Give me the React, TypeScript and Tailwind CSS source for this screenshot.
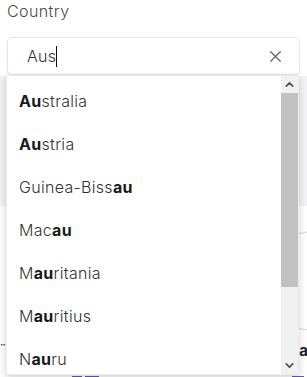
import { X, ChevronUp, ChevronDown } from "lucide-react";

const options: [string, string, string][] = [
  ["", "Au", "stralia"],
  ["", "Au", "stria"],
  ["Guinea-Biss", "au", ""],
  ["Mac", "au", ""],
  ["M", "au", "ritania"],
  ["M", "au", "ritius"],
  ["N", "au", "ru"],
];

export default function App() {
  return (
    <div className="relative w-[307px] h-[377px] overflow-hidden bg-white font-['Inter',sans-serif]">
      <div className="px-[7px]">
        <label className="block text-[16px] leading-[22px] tracking-[0.4px] font-light text-[#4a4a4a]">Country</label>
        <div className="mt-[15px] h-[38px] flex items-center rounded-[5px] border border-[#e6e6e6] bg-white pl-[19px] pr-[14px] shadow-[0_1px_2px_rgba(0,0,0,0.05)]">
          <span className="text-[16px] tracking-[0.3px] font-light text-[#333]">Aus</span>
          <span className="w-px h-[21px] bg-[#111]" />
          <X className="ml-auto w-[19px] h-[19px] text-[#666]" strokeWidth={1.6} />
        </div>
      </div>

      {/* page content behind the open list */}
      <div className="mt-[1px] h-[130px] bg-[#f3f3f5]" />
      <div className="relative h-[172px]">
        <svg className="absolute inset-0" width="307" height="172">
          <path d="M280 32 L307 26" stroke="#d8d8d8" fill="none" />
          <path d="M280 119 L307 124" stroke="#d8d8d8" fill="none" />
        </svg>
        <span className="absolute left-0 top-[133px] text-[12px] leading-none text-[#333] tracking-[-1px]">··</span>
        <span className="absolute right-[-1px] top-[134px] text-[15px] font-bold text-[#222]">a</span>
        <div className="absolute left-[72px] bottom-0 flex gap-[3px]">
          <div className="w-[10px] h-[2px] bg-[#6b55b5]" />
          <div className="w-[14px] h-[2px] bg-[#6b55b5]" />
        </div>
        <div className="absolute right-[3px] bottom-0 w-[12px] h-[2px] bg-[#6b55b5]" />
      </div>

      {/* open dropdown */}
      <div className="absolute left-[6px] top-[75px] w-[293px] h-[300px] flex bg-white rounded-b-[3px] shadow-[0_3px_8px_rgba(0,0,0,0.18)] border border-[#ececec]">
        <ul className="flex-1 overflow-hidden pt-[3px]">
          {options.map(([a, b, c]) => (
            <li key={a + b + c} className="h-[43px] shrink-0 flex items-center pl-[12px] text-[16px] tracking-[0.3px] font-light text-[#333]">
              {a}
              <b className="font-bold text-[#1a1a1a]">{b}</b>
              {c}
            </li>
          ))}
        </ul>
        <div className="w-[17px] flex flex-col bg-[#f1f1f1]">
          <div className="h-[17px] flex items-center justify-center">
            <ChevronUp className="w-[13px] h-[13px] text-[#505050]" strokeWidth={3} />
          </div>
          <div className="h-[194px] bg-[#c1c1c1]" />
          <div className="flex-1" />
          <div className="h-[17px] flex items-center justify-center">
            <ChevronDown className="w-[13px] h-[13px] text-[#505050]" strokeWidth={3} />
          </div>
        </div>
      </div>
    </div>
  );
}
